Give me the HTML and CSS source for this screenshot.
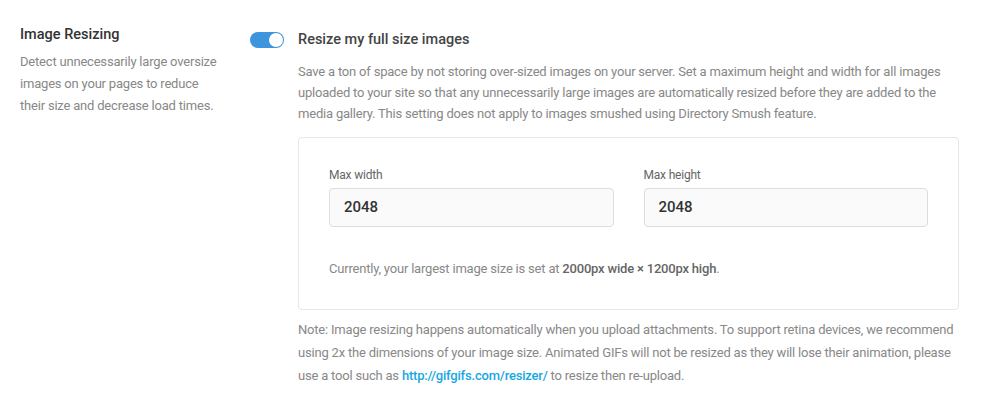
FILE: index.html
```html
<!DOCTYPE html>
<html>
<head>
<meta charset="utf-8">
<link rel="stylesheet" href="styles.css">
</head>
<body>
<div class="row">
  <div class="side">
    <h3 class="side-title">Image Resizing</h3>
    <p class="side-desc">Detect unnecessarily large oversize images on your pages to reduce their size and decrease load times.</p>
  </div>
  <div class="main">
    <div class="toggle-row">
      <span class="toggle"><span class="knob"></span></span>
      <span class="toggle-label">Resize my full size images</span>
    </div>
    <p class="desc">Save a ton of space by not storing over-sized images on your server. Set a maximum height and width for all images uploaded to your site so that any unnecessarily large images are automatically resized before they are added to the media gallery. This setting does not apply to images smushed using Directory Smush feature.</p>
    <div class="box">
      <div class="fields">
        <div class="field">
          <label class="field-label">Max width</label>
          <div class="input">2048</div>
        </div>
        <div class="field">
          <label class="field-label">Max height</label>
          <div class="input">2048</div>
        </div>
      </div>
      <p class="current">Currently, your largest image size is set at <strong>2000px wide × 1200px high</strong>.</p>
    </div>
    <p class="note">Note: Image resizing happens automatically when you upload attachments. To support retina devices, we recommend using 2x the dimensions of your image size. Animated GIFs will not be resized as they will lose their animation, please use a tool such as <a href="#">http://gifgifs.com/resizer/</a> to resize then re-upload.</p>
  </div>
</div>
</body>
</html>
```
FILE: styles.css
```css
* { box-sizing: border-box; }
html, body { margin: 0; padding: 0; background: #fff; }
body {
  font-family: Roboto, "Noto Sans", sans-serif;
  color: #888;
  font-size: 13px;
  letter-spacing: -0.2px;
}
.row {
  display: flex;
  padding: 24px 0 0 20px;
}
.side {
  width: 230px;
  padding-right: 30px;
  flex: none;
}
.side-title {
  margin: 0;
  font-size: 14.5px;
  font-weight: 500;
  color: #333;
  line-height: 22px;
  letter-spacing: 0;
}
.side-desc {
  margin: 5px 0 0;
  line-height: 22px;
  font-size: 13px;
  color: #888;
}
.main {
  width: 710px;
  flex: none;
}
.toggle-row {
  display: flex;
  align-items: center;
  height: 34px;
  margin-top: -1px;
}
.toggle {
  width: 34px;
  height: 16px;
  border-radius: 8px;
  background: #3d96dd;
  position: relative;
  margin-right: 14px;
  flex: none;
}
.knob {
  position: absolute;
  right: 1px;
  top: 1px;
  width: 14px;
  height: 14px;
  border-radius: 50%;
  background: #fff;
}
.toggle-label {
  font-size: 14.5px;
  font-weight: 500;
  color: #444;
  line-height: 22px;
  letter-spacing: 0;
}
.main > .desc, .main > .box, .main > .note { margin-left: 48px; }
.desc {
  margin: 4px 0 0;
  line-height: 21px;
  color: #888;
}
.box {
  margin-top: 13px;
  border: 1px solid #e6e6e6;
  border-radius: 4px;
  padding: 29px 30px 30px;
  width: 661px;
}
.fields {
  display: flex;
  gap: 30px;
}
.field {
  flex: 1;
}
.field-label {
  display: block;
  font-size: 12px;
  color: #666;
  line-height: 16px;
  margin-bottom: 5px;
}
.input {
  height: 39px;
  border: 1px solid #ddd;
  border-radius: 4px;
  background: #fafafa;
  padding: 0 14px;
  font-size: 15px;
  font-weight: 500;
  color: #333;
  line-height: 37px;
  letter-spacing: 0;
}
.current {
  margin: 32px 0 0;
  line-height: 20px;
  color: #888;
}
.current strong { font-weight: 500; color: #666; }
.note {
  margin: 8px 0 0;
  line-height: 23px;
  color: #888;
}
.note a {
  color: #17a8e3;
  font-weight: 500;
  text-decoration: none;
}
```
